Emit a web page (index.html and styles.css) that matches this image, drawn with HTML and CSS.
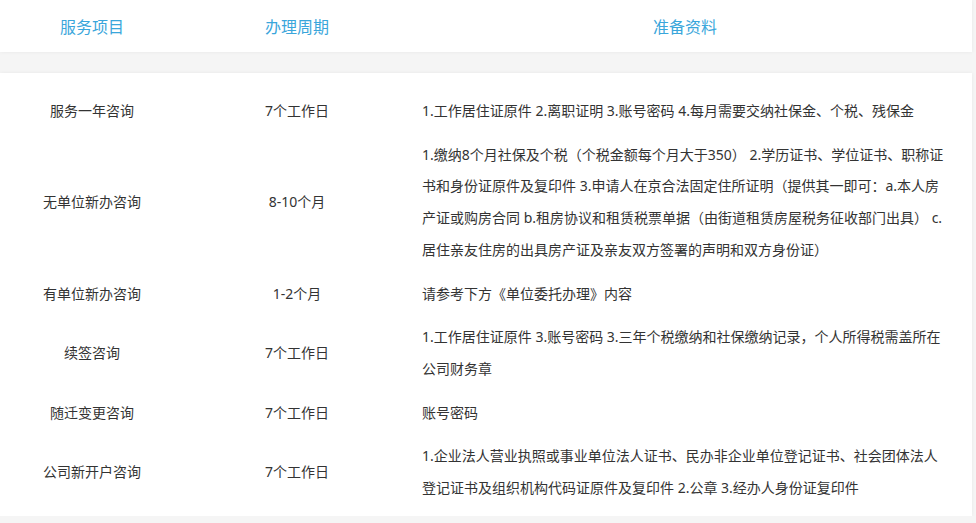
FILE: index.html
```html
<!DOCTYPE html>
<html lang="zh-CN">
<head>
<meta charset="utf-8">
<link rel="stylesheet" href="styles.css">
</head>
<body>
<div class="page">
  <div class="card head">
    <div class="c1">服务项目</div>
    <div class="c2">办理周期</div>
    <div class="c3">准备资料</div>
  </div>
  <div class="card body">
    <div class="row">
      <div class="c1">服务一年咨询</div>
      <div class="c2">7个工作日</div>
      <div class="c3 txt">1.工作居住证原件 2.离职证明 3.账号密码 4.每月需要交纳社保金、个税、残保金</div>
    </div>
    <div class="row">
      <div class="c1">无单位新办咨询</div>
      <div class="c2">8-10个月</div>
      <div class="c3 txt">1.缴纳8个月社保及个税（个税金额每个月大于350） 2.学历证书、学位证书、职称证书和身份证原件及复印件 3.申请人在京合法固定住所证明（提供其一即可：a.本人房产证或购房合同 b.租房协议和租赁税票单据（由街道租赁房屋税务征收部门出具） c.居住亲友住房的出具房产证及亲友双方签署的声明和双方身份证）</div>
    </div>
    <div class="row">
      <div class="c1">有单位新办咨询</div>
      <div class="c2">1-2个月</div>
      <div class="c3 txt">请参考下方《单位委托办理》内容</div>
    </div>
    <div class="row">
      <div class="c1">续签咨询</div>
      <div class="c2">7个工作日</div>
      <div class="c3 txt">1.工作居住证原件 3.账号密码 3.三年个税缴纳和社保缴纳记录，个人所得税需盖所在公司财务章</div>
    </div>
    <div class="row">
      <div class="c1">随迁变更咨询</div>
      <div class="c2">7个工作日</div>
      <div class="c3 txt">账号密码</div>
    </div>
    <div class="row">
      <div class="c1">公司新开户咨询</div>
      <div class="c2">7个工作日</div>
      <div class="c3 txt">1.企业法人营业执照或事业单位法人证书、民办非企业单位登记证书、社会团体法人登记证书及组织机构代码证原件及复印件 2.公章 3.经办人身份证复印件</div>
    </div>
  </div>
</div>
</body>
</html>
```
FILE: styles.css
```css
html, body {
  margin: 0;
  padding: 0;
  background: #f5f5f5;
}
body {
  font-family: "Noto Sans", "Noto Sans CJK SC", sans-serif;
  color: #333;
}
.page {
  width: 972px;
  display: flex;
  flex-direction: column;
  gap: 21px;
}
.card {
  background: #fff;
  box-shadow: 0 0 4px rgba(0,0,0,0.06);
}
.head {
  height: 52px;
  display: flex;
  align-items: center;
  font-size: 16px;
  color: #3aa6db;
}
.c1 { width: 184px; text-align: center; flex: none; }
.c2 { width: 226px; text-align: center; flex: none; }
.c3 { width: 550px; text-align: center; flex: none; }
.body {
  padding: 16px 0 6px;
  display: flex;
  flex-direction: column;
  font-size: 14px;
}
.row {
  display: flex;
  align-items: center;
  padding: 6px 0;
  line-height: 31.7px;
}
.c3.txt {
  text-align: left;
  padding: 0 10px 0 12px;
  box-sizing: border-box;
}
```
